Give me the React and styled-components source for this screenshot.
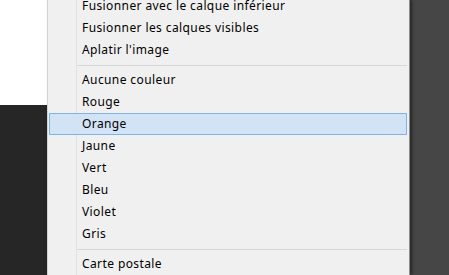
import React from 'react'
import styled, { createGlobalStyle } from 'styled-components'

const GlobalStyle = createGlobalStyle`
  html, body {
    margin: 0;
    padding: 0;
    overflow: hidden;
  }
`

const Page = styled.div`
  display: flex;
  width: 449px;
  height: 275px;
  overflow: hidden;
  font-family: "Noto Sans", "Open Sans", sans-serif;
`

const LeftPane = styled.div`
  width: 47px;
  display: flex;
  flex-direction: column;
`

const Canvas = styled.div`
  height: 105px;
  background: #ffffff;
`

const Dock = styled.div`
  flex: 1;
  background: #262626;
`

const Menu = styled.div`
  width: 361px;
  height: 100%;
  border-left: 1px solid #d2d2d2;
  border-right: 1px solid #8c8c8c;
  background: linear-gradient(to right, #f0f0f0 28px, #e2e2e2 28px, #e2e2e2 29px, #f0f0f0 29px);
  box-shadow: 2px 0 3px rgba(0, 0, 0, 0.45);
  position: relative;
  z-index: 1;
`

const List = styled.div`
  margin-top: -5px;
  display: flex;
  flex-direction: column;
`

const Item = styled.div`
  height: 22px;
  margin: 0 2px 0 1px;
  padding-left: 32px;
  font-size: 12px;
  letter-spacing: 0.4px;
  line-height: 20px;
  color: #000;
  white-space: nowrap;
  box-sizing: border-box;
  border: 1px solid ${p => (p.active ? '#7eb4ea' : 'transparent')};
  background: ${p => (p.active ? '#d1e3f4' : 'transparent')};
`

const Separator = styled.div`
  height: 8px;
  display: flex;
  align-items: center;
  margin: 0 2px 0 29px;

  &::after {
    content: '';
    flex: 1;
    height: 1px;
    background: #d7d7d7;
  }
`

const Backdrop = styled.div`
  flex: 1;
  background: #464646;
`

const groups = [
  ['Fusionner avec le calque inférieur', 'Fusionner les calques visibles', "Aplatir l'image"],
  ['Aucune couleur', 'Rouge', 'Orange', 'Jaune', 'Vert', 'Bleu', 'Violet', 'Gris'],
  ['Carte postale'],
]

const App = () => {
  return (
    <Page>
      <GlobalStyle />
      <LeftPane>
        <Canvas />
        <Dock />
      </LeftPane>
      <Menu>
        <List>
          {groups.map((group, i) => (
            <React.Fragment key={i}>
              {i > 0 && <Separator />}
              {group.map(label => (
                <Item key={label} active={label === 'Orange'}>{label}</Item>
              ))}
            </React.Fragment>
          ))}
        </List>
      </Menu>
      <Backdrop />
    </Page>
  )
}

export default App
